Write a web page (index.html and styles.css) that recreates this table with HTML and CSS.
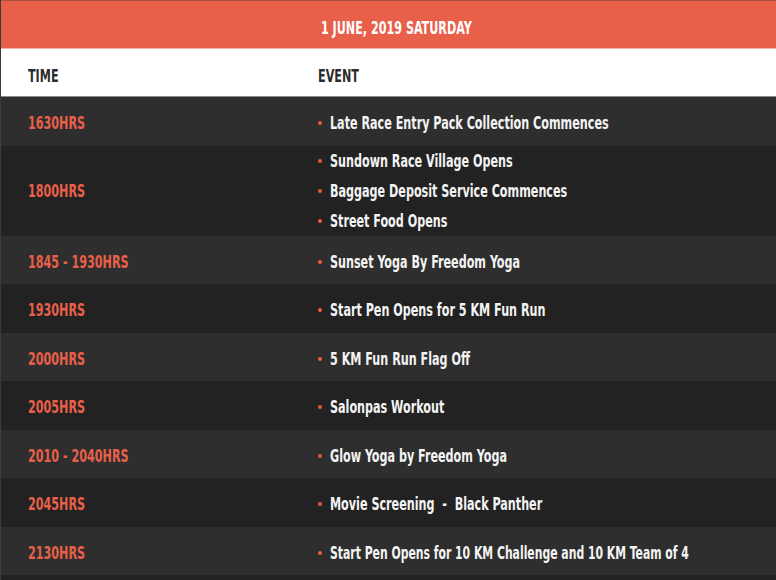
FILE: index.html
```html
<!DOCTYPE html>
<html lang="en">
<head>
<meta charset="utf-8">
<title>Schedule</title>
<link rel="stylesheet" href="styles.css">
</head>
<body>
<div class="schedule">
  <div class="title"><span class="txt">1 JUNE, 2019 SATURDAY</span></div>
  <div class="head">
    <div class="c-time"><span class="txt">TIME</span></div>
    <div class="c-event"><span class="txt">EVENT</span></div>
  </div>
  <div class="row light">
    <div class="c-time"><span class="txt">1630HRS</span></div>
    <ul class="c-event"><li><span class="txt">Late Race Entry Pack Collection Commences</span></li></ul>
  </div>
  <div class="row dark multi">
    <div class="c-time"><span class="txt">1800HRS</span></div>
    <ul class="c-event">
      <li><span class="txt">Sundown Race Village Opens</span></li>
      <li><span class="txt">Baggage Deposit Service Commences</span></li>
      <li><span class="txt">Street Food Opens</span></li>
    </ul>
  </div>
  <div class="row light">
    <div class="c-time"><span class="txt">1845 - 1930HRS</span></div>
    <ul class="c-event"><li><span class="txt">Sunset Yoga By Freedom Yoga</span></li></ul>
  </div>
  <div class="row dark">
    <div class="c-time"><span class="txt">1930HRS</span></div>
    <ul class="c-event"><li><span class="txt">Start Pen Opens for 5 KM Fun Run</span></li></ul>
  </div>
  <div class="row light">
    <div class="c-time"><span class="txt">2000HRS</span></div>
    <ul class="c-event"><li><span class="txt">5 KM Fun Run Flag Off</span></li></ul>
  </div>
  <div class="row dark">
    <div class="c-time"><span class="txt">2005HRS</span></div>
    <ul class="c-event"><li><span class="txt">Salonpas Workout</span></li></ul>
  </div>
  <div class="row light">
    <div class="c-time"><span class="txt">2010 - 2040HRS</span></div>
    <ul class="c-event"><li><span class="txt">Glow Yoga by Freedom Yoga</span></li></ul>
  </div>
  <div class="row dark">
    <div class="c-time"><span class="txt">2045HRS</span></div>
    <ul class="c-event"><li><span class="txt">Movie Screening &nbsp;- &nbsp;Black Panther</span></li></ul>
  </div>
  <div class="row light">
    <div class="c-time"><span class="txt">2130HRS</span></div>
    <ul class="c-event"><li><span class="txt tight">Start Pen Opens for 10 KM Challenge and 10 KM Team of 4</span></li></ul>
  </div>
  <div class="row dark">
    <div class="c-time"></div>
    <ul class="c-event"></ul>
  </div>
</div>
</body>
</html>
```
FILE: styles.css
```css
html, body {
  margin: 0;
  padding: 0;
  background: #222222;
  overflow: hidden;
}

.schedule {
  width: 790px;
  border-left: 1px solid #3c3c3c;
  font-family: "DejaVu Sans Condensed", "DejaVu Sans", sans-serif;
  font-weight: 700;
  font-size: 18px;
  line-height: 30px;
}

.txt {
  display: inline-block;
  white-space: nowrap;
  transform: scaleX(0.69);
  transform-origin: left center;
}

.txt.tight {
  transform: scaleX(0.67);
}

.title {
  height: 49px;
  box-sizing: border-box;
  border-top: 1px solid #a9503f;
  border-bottom: 1px solid #f5b5a9;
  background: #e8604a;
  color: #ffffff;
  display: flex;
  align-items: center;
  justify-content: center;
  padding-top: 6px;
}

.title .txt {
  transform-origin: center center;
}

.head {
  height: 48px;
  box-sizing: border-box;
  background: #ffffff;
  border-bottom: 1px solid #8c8c8c;
  color: #2c2c2c;
  display: flex;
  align-items: center;
  padding-top: 6px;
}

.c-time {
  width: 262px;
  padding-left: 27px;
  flex: none;
}

.c-event {
  margin: 0;
  padding: 0 0 0 28px;
  list-style: none;
}

.row {
  display: flex;
  align-items: center;
  min-height: 48.5px;
  padding-top: 4px;
  box-sizing: border-box;
}

.row.multi {
  min-height: 89px;
  padding-top: 0;
}

.row.light {
  background: #2e2e2e;
}

.row.dark {
  background: #222222;
}

.row .c-time {
  color: #e8604a;
}

.row .c-event li {
  color: #f4f4f4;
  display: flex;
  align-items: center;
  gap: 8px;
}

.row .c-event li::before {
  content: "";
  width: 4px;
  height: 4px;
  border-radius: 50%;
  background: #ee5a40;
  flex: none;
}
```
